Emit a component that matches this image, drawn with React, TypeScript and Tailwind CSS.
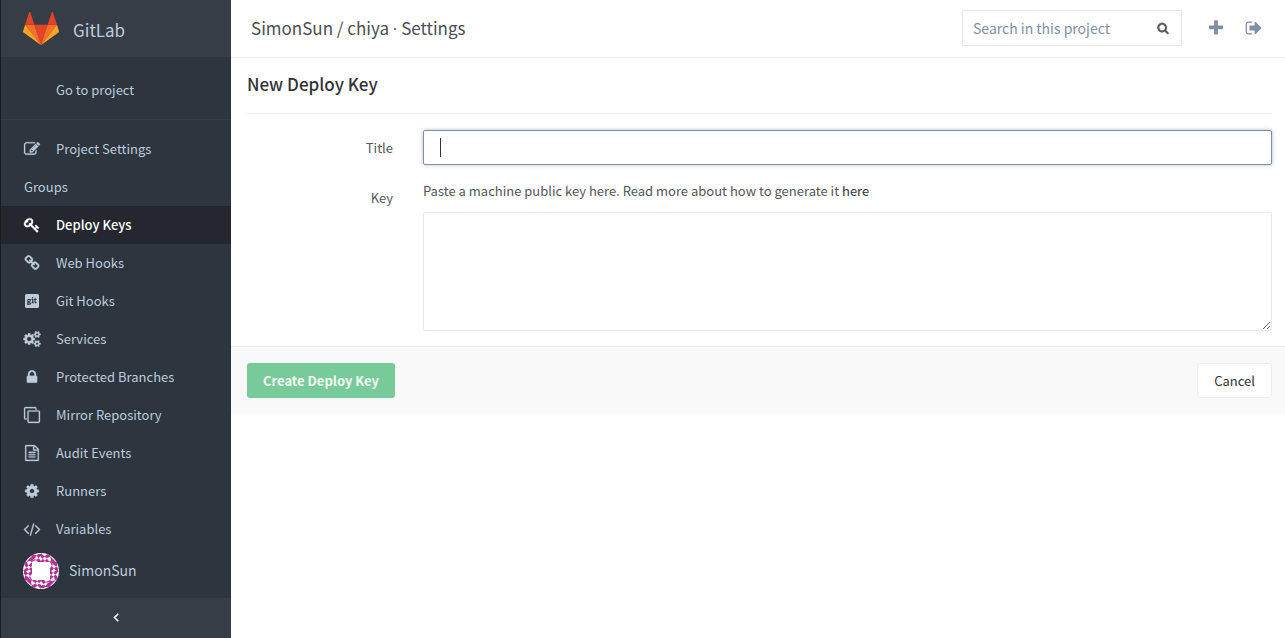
import type { ReactNode } from "react";
import { FaGitSquare } from "react-icons/fa";

const SMALL_GEAR =
  "q0 16-149 31-12 27-30 52 51 113 51 138 0 4-4 7-122 71-124 71-8 0-46-47t-52-68q-20 2-30 2t-30-2q-14 21-52 68t-46 47q-2 0-124-71-4-3-4-7 0-25 51-138-18-25-30-52-149-15-149-31v-140q0-16 149-31 13-29 30-52-51-113-51-138 0-4 4-7 4-2 35-20t59-34 30-16q8 0 46 46.5t52 67.5q20-2 30-2t30 2q51-71 92-112l6-2q4 0 124 70 4 3 4 7 0 25-51 138 17 23 30 52 149 15 149 31z";

const ICONS = {
  edit: "M888 1184l116-116-152-152-116 116v56h96v96h56zm440-720q-16-16-33 1l-350 350q-17 17-1 33t33-1l350-350q17-17 1-33zm80 594v190q0 119-84.5 203.5t-203.5 84.5h-832q-119 0-203.5-84.5t-84.5-203.5v-832q0-119 84.5-203.5t203.5-84.5h832q63 0 117 25 15 7 18 23 3 17-9 29l-49 49q-14 14-32 8-23-6-45-6h-832q-66 0-113 47t-47 113v832q0 66 47 113t113 47h832q66 0 113-47t47-113v-126q0-13 9-22l64-64q15-15 35-7t20 29zm-96-738l288 288-672 672h-288v-288zm444 132l-92 92-288-288 92-92q28-28 68-28t68 28l152 152q28 28 28 68t-28 68z",
  key: "M832 512q0-80-56-136t-136-56-136 56-56 136q0 42 19 83-41-19-83-19-80 0-136 56t-56 136 56 136 136 56 136-56 56-136q0-42-19-83 41 19 83 19 80 0 136-56t56-136zm851 704q0 17-49 66t-66 49q-9 0-28.5-16t-36.5-33-38.5-40-24.5-26l-96 96 220 220q28 28 28 68 0 42-39 81t-81 39q-40 0-68-28l-671-671q-176 131-365 131-163 0-265.5-102.5t-102.5-265.5q0-160 95-313t248-248 313-95q163 0 265.5 102.5t102.5 265.5q0 189-131 365l355 355 96-96q-3-3-26-24.5t-40-38.5-33-36.5-16-28.5q0-17 49-66t66-49q13 0 23 10 6 6 46 44.5t82 79.5 86.5 86 73 78 28.5 41z",
  link: "M1520 1216q0-40-28-68l-208-208q-28-28-68-28-42 0-72 32 3 3 19 18.5t21.5 21.5 15 19 13 25.5 3.5 27.5q0 40-28 68t-68 28q-15 0-27.5-3.5t-25.5-13-19-15-21.5-21.5-18.5-19q-33 31-33 73 0 40 28 68l206 207q27 27 68 27 40 0 68-26l147-146q28-28 28-67zm-703-705q0-40-28-68l-206-207q-28-28-68-28-39 0-68 27l-147 146q-28 28-28 67 0 40 28 68l208 208q27 27 68 27 42 0 72-31-3-3-19-18.5t-21.5-21.5-15-19-13-25.5-3.5-27.5q0-40 28-68t68-28q15 0 27.5 3.5t25.5 13 19 15 21.5 21.5 18.5 19q33-31 33-73zm895 705q0 120-85 203l-147 146q-83 83-203 83-121 0-204-85l-206-207q-83-83-83-203 0-123 88-209l-88-88q-86 88-208 88-120 0-204-84l-208-208q-84-84-84-204t85-203l147-146q83-83 203-83 121 0 204 85l206 207q83 83 83 203 0 123-88 209l88 88q86-88 208-88 120 0 204 84l208 208q84 84 84 204z",
  cogs:
    "M832 896q0-106-75-181t-181-75-181 75-75 181 75 181 181 75 181-75 75-181zm768 512q0-52-38-90t-90-38-90 38-38 90q0 53 37.5 90.5t90.5 37.5 90.5-37.5 37.5-90.5zm0-1024q0-52-38-90t-90-38-90 38-38 90q0 53 37.5 90.5t90.5 37.5 90.5-37.5 37.5-90.5zm-384 421v185q0 10-7 19.5t-16 10.5l-155 24q-11 35-32 76 34 48 90 115 7 11 7 20 0 12-7 19-23 30-82.5 89.5t-78.5 59.5q-11 0-21-7l-115-90q-37 19-77 31-11 108-23 155-7 24-30 24h-186q-11 0-20-7.5t-10-17.5l-23-153q-34-10-75-31l-118 89q-7 7-20 7-11 0-21-8-144-133-144-160 0-9 7-19 10-14 41-53t47-61q-23-44-35-82l-152-24q-10-1-17-9.5t-7-19.5v-185q0-10 7-19.5t16-10.5l155-24q11-35 32-76-34-48-90-115-7-11-7-20 0-12 7-20 22-30 82-89t79-59q11 0 21 7l115 90q34-18 77-32 11-108 23-154 7-24 30-24h186q11 0 20 7.5t10 17.5l23 153q34 10 75 31l118-89q8-7 20-7 11 0 21 8 144 133 144 160 0 8-7 19-12 16-42 54t-45 60q23 48 34 82l152 23q10 2 17 10.5t7 19.5zM1856 1338v140" +
    SMALL_GEAR +
    "M1856 314v140" +
    SMALL_GEAR,
  lock: "M640 768h512v-192q0-106-75-181t-181-75-181 75-75 181v192zm832 96v576q0 40-28 68t-68 28h-960q-40 0-68-28t-28-68v-576q0-40 28-68t68-28h32v-192q0-184 132-316t316-132 316 132 132 316v192h32q40 0 68 28t28 68z",
  clone: "M1664 1632v-1088q0-13-9.5-22.5t-22.5-9.5h-1088q-13 0-22.5 9.5t-9.5 22.5v1088q0 13 9.5 22.5t22.5 9.5h1088q13 0 22.5-9.5t9.5-22.5zm128-1088v1088q0 66-47 113t-113 47h-1088q-66 0-113-47t-47-113v-1088q0-66 47-113t113-47h1088q66 0 113 47t47 113zm-384-384v160h-128v-160q0-13-9.5-22.5t-22.5-9.5h-1088q-13 0-22.5 9.5t-9.5 22.5v1088q0 13 9.5 22.5t22.5 9.5h160v128h-160q-66 0-113-47t-47-113v-1088q0-66 47-113t113-47h1088q66 0 113 47t47 113z",
  file: "M1596 380q28 28 48 76t20 88v1152q0 40-28 68t-68 28h-1344q-40 0-68-28t-28-68v-1600q0-40 28-68t68-28h896q40 0 88 20t76 48zm-444-244v376h376q-10-29-22-41l-313-313q-12-12-41-22zm384 1528v-1024h-416q-40 0-68-28t-28-68v-416h-768v1536h1280zm-1024-864q0-14 9-23t23-9h704q14 0 23 9t9 23v64q0 14-9 23t-23 9h-704q-14 0-23-9t-9-23v-64zm736 224q14 0 23 9t9 23v64q0 14-9 23t-23 9h-704q-14 0-23-9t-9-23v-64q0-14 9-23t23-9h704zm0 256q14 0 23 9t9 23v64q0 14-9 23t-23 9h-704q-14 0-23-9t-9-23v-64q0-14 9-23t23-9h704z",
  cog: "M1152 896q0-106-75-181t-181-75-181 75-75 181 75 181 181 75 181-75 75-181zm512-109v222q0 12-8 23t-20 13l-185 28q-19 54-39 91 35 50 107 138 10 12 10 25t-9 23q-27 37-99 108t-94 71q-12 0-26-9l-138-108q-44 23-91 38-16 136-29 186-7 28-36 28h-222q-14 0-24.5-8.5t-11.5-21.5l-28-184q-49-16-90-37l-141 107q-10 9-25 9-14 0-25-11-126-114-165-168-7-10-7-23 0-12 8-23 15-21 51-66.5t54-70.5q-27-50-41-99l-183-27q-13-2-21-12.5t-8-23.5v-222q0-12 8-23t19-13l186-28q14-46 39-92-40-57-107-138-10-12-10-24 0-10 9-23 26-36 98.5-107.5t94.5-71.5q13 0 26 10l138 107q44-23 91-38 16-136 29-186 7-28 36-28h222q14 0 24.5 8.5t11.5 21.5l28 184q49 16 90 37l142-107q9-9 24-9 13 0 25 10 129 119 165 170 7 8 7 22 0 12-8 23-15 21-51 66.5t-54 70.5q26 50 41 98l183 28q13 2 21 12.5t8 23.5z",
  code: "M553 1399l-50 50q-10 10-23 10t-23-10l-466-466q-10-10-10-23t10-23l466-466q10-10 23-10t23 10l50 50q10 10 10 23t-10 23l-393 393 393 393q10 10 10 23t-10 23zm591-1067l-373 1291q-4 13-15.5 19.5t-23.5 2.5l-62-17q-13-4-19.5-15.5t-2.5-24.5l373-1291q4-13 15.5-19.5t23.5-2.5l62 17q13 4 19.5 15.5t2.5 24.5zm657 651l-466 466q-10 10-23 10t-23-10l-50-50q-10-10-10-23t10-23l393-393-393-393q-10-10-10-23t10-23l50-50q10-10 23-10t23 10l466 466q10 10 10 23t-10 23z",
  left: "M1203 544q0 13-10 23l-393 393 393 393q10 10 10 23t-10 23l-50 50q-10 10-23 10t-23-10l-466-466q-10-10-10-23t10-23l466-466q10-10 23-10t23 10l50 50q10 10 10 23z",
  search: "M1216 832q0-185-131.5-316.5t-316.5-131.5-316.5 131.5-131.5 316.5 131.5 316.5 316.5 131.5 316.5-131.5 131.5-316.5zm512 832q0 52-38 90t-90 38q-54 0-90-38l-343-342q-179 124-399 124-143 0-273.5-55.5t-225-150-150-225-55.5-273.5 55.5-273.5 150-225 225-150 273.5-55.5 273.5 55.5 225 150 150 225 55.5 273.5q0 220-124 399l343 343q37 37 37 90z",
  plus: "M1600 736v192q0 40-28 68t-68 28h-416v416q0 40-28 68t-68 28h-192q-40 0-68-28t-28-68v-416h-416q-40 0-68-28t-28-68v-192q0-40 28-68t68-28h416v-416q0-40 28-68t68-28h192q40 0 68 28t28 68v416h416q40 0 68 28t28 68z",
  signOut: "M704 1440q0 4 1 20t.5 26.5-3 23.5-10 19.5-20.5 6.5h-320q-119 0-203.5-84.5t-84.5-203.5v-704q0-119 84.5-203.5t203.5-84.5h320q13 0 22.5 9.5t9.5 22.5q0 4 1 20t.5 26.5-3 23.5-10 19.5-20.5 6.5h-320q-66 0-113 47t-47 113v704q0 66 47 113t113 47h312l11.5 1 11.5 3 8 5.5 7 9 2 13.5zm928-544q0 26-19 45l-544 544q-19 19-45 19t-45-19-19-45v-288h-448q-26 0-45-19t-19-45v-384q0-26 19-45t45-19h448v-288q0-26 19-45t45-19 45 19l544 544q19 19 19 45z",
};

type IconName = keyof typeof ICONS;

function Icon({ name, className }: { name: IconName; className: string }) {
  return (
    <svg viewBox="0 0 1792 1792" className={className} fill="currentColor" overflow="visible" aria-hidden="true">
      <path d={ICONS[name]} />
    </svg>
  );
}

function Logo() {
  return (
    <svg viewBox="0 0 210 194" className="w-9 shrink-0" aria-hidden="true">
      <path fill="#e24329" d="M105.06 193.66l38.64-118.92H66.42z" />
      <path fill="#fc6d26" d="M105.06 193.66L66.42 74.73H12.27z" />
      <path fill="#fca326" d="M12.27 74.73L.53 110.87c-1.07 3.3.1 6.91 2.9 8.95l101.63 73.84z" />
      <path fill="#e24329" d="M12.27 74.73h54.15L43.15 3.11c-1.2-3.69-6.41-3.69-7.61 0z" />
      <path fill="#fc6d26" d="M105.06 193.66l38.64-118.93h54.15z" />
      <path fill="#fca326" d="M197.85 74.73l11.74 36.14c1.07 3.3-.1 6.91-2.9 8.95l-101.63 73.84z" />
      <path fill="#e24329" d="M197.85 74.73H143.7l23.27-71.62c1.2-3.69 6.41-3.69 7.61 0z" />
    </svg>
  );
}

function Avatar() {
  return (
    <svg viewBox="0 0 36 36" className="size-9 shrink-0" aria-hidden="true">
      <defs>
        <clipPath id="avatar-circle">
          <circle cx="18" cy="18" r="18" />
        </clipPath>
        <g id="avatar-side">
          <path d="M9 1l4 1 5 6v1h-3l-3-3-3 2zM18 1l-3 0-3 4-3 3v1l4-2 5-4zM18 0l4 4 5 5h-4l-4-4-1-1zM27 0l-4 2-5 6v1h3l3-4 3-1z" />
          <path d="M3 9l6-6v6l-2-1z" />
        </g>
      </defs>
      <circle cx="18" cy="18" r="18" fill="#fff" />
      <g clipPath="url(#avatar-circle)" fill="#b13294">
        <use href="#avatar-side" />
        <use href="#avatar-side" transform="rotate(90 18 18)" />
        <use href="#avatar-side" transform="rotate(180 18 18)" />
        <use href="#avatar-side" transform="rotate(270 18 18)" />
      </g>
    </svg>
  );
}

const NAV_ICON = "size-4 stroke-current [stroke-width:30]";

const NAV: { label: string; icon?: ReactNode; active?: boolean }[] = [
  { label: "Project Settings", icon: <Icon name="edit" className={NAV_ICON} /> },
  { label: "Groups" },
  { label: "Deploy Keys", icon: <Icon name="key" className={NAV_ICON} />, active: true },
  { label: "Web Hooks", icon: <Icon name="link" className={NAV_ICON} /> },
  { label: "Git Hooks", icon: <FaGitSquare className="size-4" /> },
  { label: "Services", icon: <Icon name="cogs" className={NAV_ICON} /> },
  { label: "Protected Branches", icon: <Icon name="lock" className={NAV_ICON} /> },
  { label: "Mirror Repository", icon: <Icon name="clone" className={NAV_ICON} /> },
  { label: "Audit Events", icon: <Icon name="file" className={NAV_ICON} /> },
  { label: "Runners", icon: <Icon name="cog" className={NAV_ICON} /> },
  { label: "Variables", icon: <Icon name="code" className={NAV_ICON} /> },
];

function Sidebar() {
  return (
    <aside className="flex w-[231px] shrink-0 flex-col border-l border-[#1b1b1b] bg-[#2d353e] text-[#bdcbdb]">
      <a href="#" className="flex h-[57px] items-center gap-3.5 bg-[#373d47] px-[22px] text-[17px]">
        <Logo />
        <span className="pt-0.5">GitLab</span>
      </a>
      <nav className="flex flex-col text-[13px]">
        <a href="#" className="mb-2.5 flex h-[63px] items-center border-b border-[#373d47] pt-1 pl-[55px]">
          Go to project
        </a>
        {NAV.map(({ label, icon, active }) => (
          <a
            key={label}
            href="#"
            className={
              active
                ? "flex h-[38px] items-center gap-4 bg-[#24272d] px-[23px] font-medium text-white"
                : "flex h-[38px] items-center gap-4 px-[23px]"
            }
          >
            {icon}
            <span>{label}</span>
          </a>
        ))}
      </nav>
      <div className="mt-auto">
        <a href="#" className="flex h-[50px] items-center gap-2.5 px-[22px] pb-1 text-sm">
          <Avatar />
          <span className="pb-0.5">SimonSun</span>
        </a>
        <button
          type="button"
          aria-label="Collapse sidebar"
          className="flex h-10 w-full items-center justify-center bg-[#373d47] pb-0.5 text-white"
        >
          <Icon name="left" className="size-3.5 stroke-current [stroke-width:80]" />
        </button>
      </div>
    </aside>
  );
}

export default function App() {
  return (
    <div className="flex min-h-screen bg-white font-['Noto_Sans_CJK_SC','Source_Sans_Pro',sans-serif] text-[13px] text-[#54565b]">
      <Sidebar />
      <main className="min-w-0 flex-1">
        <header className="flex h-[58px] items-center border-b border-[#eee] pr-[22px] pb-0.5 pl-5">
          <h1 className="flex-1 pt-0.5 text-[17px] text-[#4c4e54]">
            SimonSun / chiya <span className="font-['Open_Sans',sans-serif]">·</span> Settings
          </h1>
          <form className="flex h-9 w-[220px] items-center rounded-xs border border-[#e7e9ed] px-2.5">
            <input
              type="search"
              aria-label="Search in this project"
              placeholder="Search in this project"
              className="min-w-0 flex-1 text-sm outline-none placeholder:text-[#7f8fa4]"
            />
            <button type="submit" aria-label="Search" className="px-0.5 text-[#555]">
              <Icon name="search" className="size-3 stroke-current [stroke-width:60]" />
            </button>
          </form>
          <a href="#" aria-label="New project" className="ml-[25px] text-[#7f8fa4]">
            <Icon name="plus" className="size-[18px]" />
          </a>
          <a href="#" aria-label="Sign out" className="ml-5 text-[#7f8fa4]">
            <Icon name="signOut" className="size-[18px]" />
          </a>
        </header>

        <form>
          <div className="px-4 pr-[13px]">
            <h2 className="flex h-14 items-center border-b border-[#eee] pb-1 text-[17px] font-medium text-[#313236]">
              New Deploy Key
            </h2>
            <div className="grid grid-cols-[146px_1fr] gap-x-[30px] pt-4 pb-[15px]">
              <label htmlFor="title" className="pt-2 text-right leading-5">
                Title
              </label>
              <div className="relative">
                <input
                  id="title"
                  type="text"
                  className="block h-[35px] w-full rounded-xs border border-[#7f8fa4] px-4 shadow-[0_0_4px_rgba(127,143,164,0.6)] outline-none"
                />
                <span className="absolute top-2 left-[17px] h-[19px] w-px bg-[#333]" aria-hidden="true" />
              </div>
              <label htmlFor="key" className="pt-[23px] text-right leading-5">
                Key
              </label>
              <div className="pt-4">
                <p className="mb-[11px] leading-5">
                  Paste a machine public key here. Read more about how to generate it{" "}
                  <a href="#" className="text-[#313236]">
                    here
                  </a>
                </p>
                <textarea
                  id="key"
                  className="block h-[119px] w-full rounded-xs border border-[#e7e9ed] px-4 py-1.5 outline-none"
                />
              </div>
            </div>
          </div>
          <div className="flex items-center justify-between border-t border-[#eee] bg-[#f9f9f9] px-4 py-4 pr-[13px]">
            <button type="submit" className="h-[35px] rounded-[3px] bg-[#78ca98] px-4 font-bold text-white/90">
              Create Deploy Key
            </button>
            <button type="button" className="h-[35px] rounded-[3px] border border-[#eee] bg-white px-4 text-[#313236]">
              Cancel
            </button>
          </div>
        </form>
      </main>
    </div>
  );
}
